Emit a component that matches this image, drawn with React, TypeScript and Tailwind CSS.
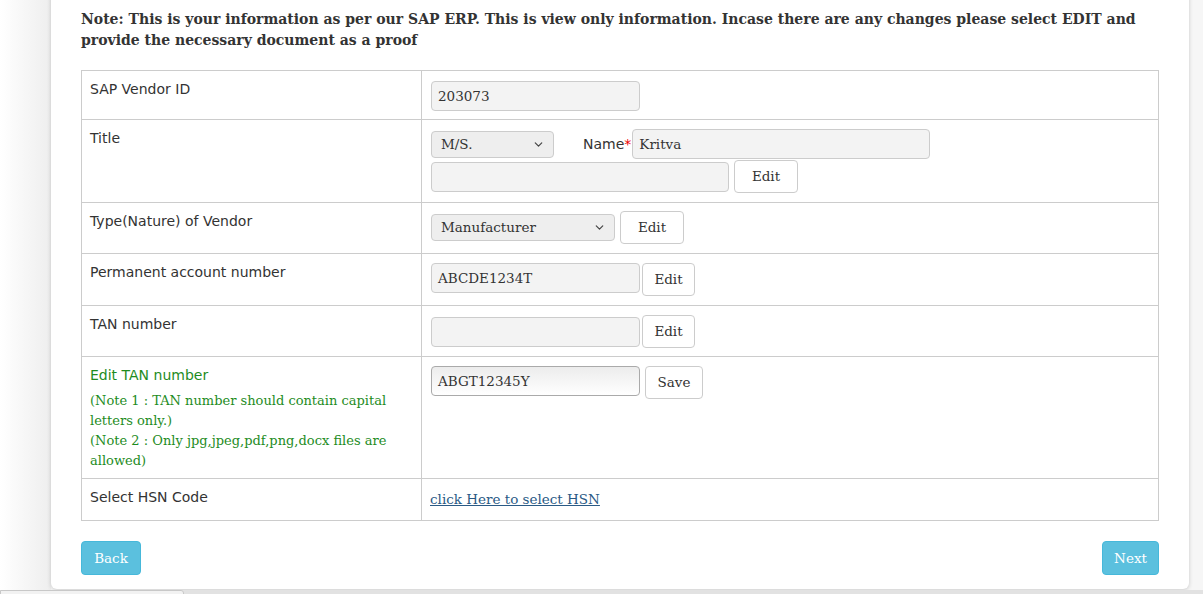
import { ChevronDown } from "lucide-react";

const sans = "font-['DejaVu_Sans',sans-serif]";
const slab = "font-['DejaVu_Serif',serif]";

const inputCls = `h-[30px] rounded-[4px] border border-[#cccccc] bg-[#f3f3f3] px-[6px] text-[13.5px] text-[#333] ${slab} flex items-center`;
const btnCls = `h-[33px] rounded-[4px] border border-[#cccccc] bg-white text-[13.5px] text-[#333] ${slab} flex items-center justify-center`;

function Select({ value, width }: { value: string; width: string }) {
  return (
    <div
      className={`${width} h-[27px] rounded-[4px] border border-[#cccccc] bg-[#eeeeee] pl-[9px] pr-[8px] flex items-center justify-between text-[13.5px] text-[#333] ${slab}`}
    >
      <span>{value}</span>
      <ChevronDown size={13} strokeWidth={2.2} className="text-[#444]" />
    </div>
  );
}

function Row({
  label,
  children,
  height,
}: {
  label: React.ReactNode;
  children: React.ReactNode;
  height: string;
}) {
  return (
    <div className={`flex border-b border-[#cccccc] ${height}`}>
      <div className={`w-[340px] shrink-0 border-r border-[#cccccc] pl-[8px] pt-[8px] text-[14px] text-[#333] ${sans}`}>
        {label}
      </div>
      <div className="flex-1 pl-[9px] pt-[9px]">{children}</div>
    </div>
  );
}

export default function App() {
  return (
    <div className="relative h-[594px] w-[1203px] overflow-hidden bg-[#f6f6f6]">
      <div className="absolute left-0 top-0 h-full w-[51px] bg-gradient-to-r from-white to-[#eeeeee]" />
      {/* card */}
      <div className="absolute left-[51px] top-[-10px] h-[599px] w-[1138px] rounded-b-[6px] bg-white shadow-[0_1px_4px_rgba(0,0,0,0.18)]">
        <div className="pl-[30px] pr-[30px] pt-[19px]">
          <p className={`text-[14px] font-bold leading-[21px] text-[#333] ${slab}`}>
            Note: This is your information as per our SAP ERP. This is view only information. Incase there are any
            changes please select EDIT and provide the necessary document as a proof
          </p>

          <div className="mt-[19px] w-[1078px] border-x border-t border-[#cccccc]">
            <Row label="SAP Vendor ID" height="h-[49px]">
              <div className={`${inputCls} w-[209px] mt-[1px]`}>203073</div>
            </Row>

            <Row label="Title" height="h-[83px]">
              <div className="flex items-center">
                <Select value="M/S." width="w-[123px] mt-[1px]" />
                <span className={`ml-[29px] text-[14px] text-[#333] ${sans}`}>
                  Name<span className="text-[#ee0000]">*</span>
                </span>
                <div className={`${inputCls} w-[298px] ml-[1px] h-[30px]`}>Kritva</div>
              </div>
              <div className="mt-[1px] flex items-center gap-[5px]">
                <div className={`${inputCls} w-[298px]`} />
                <div className={`${btnCls} w-[64px]`}>Edit</div>
              </div>
            </Row>

            <Row label="Type(Nature) of Vendor" height="h-[51px]">
              <div className="flex items-center gap-[5px] -mt-[1px]">
                <Select value="Manufacturer" width="w-[184px]" />
                <div className={`${btnCls} w-[64px]`}>Edit</div>
              </div>
            </Row>

            <Row label="Permanent account number" height="h-[52px]">
              <div className="flex items-start gap-[2px]">
                <div className={`${inputCls} w-[209px]`}>ABCDE1234T</div>
                <div className={`${btnCls} w-[53px]`}>Edit</div>
              </div>
            </Row>

            <Row label="TAN number" height="h-[51px]">
              <div className="flex items-center gap-[2px]">
                <div className={`${inputCls} w-[209px]`} />
                <div className={`${btnCls} w-[53px]`}>Edit</div>
              </div>
            </Row>

            <Row
              height="h-[122px]"
              label={
                <div className="text-[#1e8c1e]">
                  <div>Edit TAN number</div>
                  <div className={`mt-[5px] text-[13px] leading-[20px] ${slab}`}>
                    (Note 1 : TAN number should contain capital letters only.)
                    <br />
                    (Note 2 : Only jpg,jpeg,pdf,png,docx files are allowed)
                  </div>
                </div>
              }
            >
              <div className="flex items-start gap-[5px]">
                <div
                  className={`h-[30px] w-[209px] rounded-[4px] border border-[#aaaaaa] bg-gradient-to-b from-[#ececec] to-white px-[6px] text-[13.5px] text-[#333] ${slab} flex items-center`}
                >
                  ABGT12345Y
                </div>
                <div className={`${btnCls} w-[58px]`}>Save</div>
              </div>
            </Row>

            <Row label="Select HSN Code" height="h-[42px]">
              <span className={`text-[13.5px] text-[#2a5a85] underline ${slab} -ml-[1px] relative -top-[2px]`}>
                click Here to select HSN
              </span>
            </Row>
          </div>

          <div className="mt-[20px] flex justify-between w-[1078px]">
            <div
              className={`h-[34px] w-[60px] rounded-[4px] border border-[#46b8da] bg-[#5bc0de] text-[13.5px] text-white ${slab} flex items-center justify-center`}
            >
              Back
            </div>
            <div
              className={`h-[34px] w-[57px] rounded-[4px] border border-[#46b8da] bg-[#5bc0de] text-[13.5px] text-white ${slab} flex items-center justify-center`}
            >
              Next
            </div>
          </div>
        </div>
      </div>
      {/* bottom strip */}
      <div className="absolute left-0 bottom-0 h-[4px] w-full bg-[#e2e2e2]" />
      <div className="absolute left-0 bottom-[-2px] h-[6px] w-[184px] rounded-tr-[3px] border border-[#c8c8c8] bg-[#f2f2f2]" />
    </div>
  );
}
